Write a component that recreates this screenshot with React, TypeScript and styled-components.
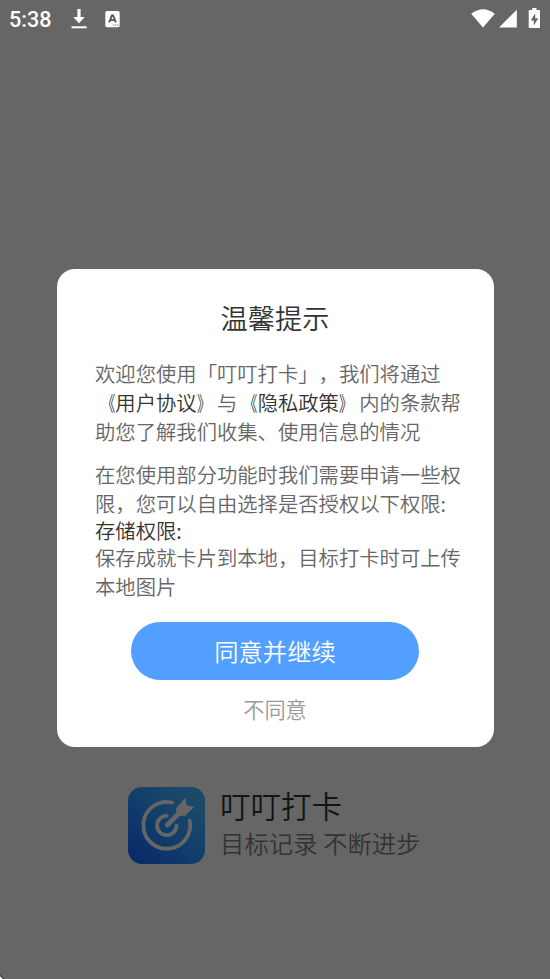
import React from "react";
import styled, { createGlobalStyle } from "styled-components";

const GlobalStyle = createGlobalStyle`
  * { box-sizing: border-box; }
  body {
    margin: 0;
    background: #666666;
    font-family: Roboto, "Noto Sans CJK SC", sans-serif;
    text-spacing-trim: space-all;
  }
`;

const Screen = styled.div`
  display: flex;
  flex-direction: column;
  align-items: center;
  width: 550px;
  height: 979px;
  overflow: hidden;
  position: relative;
  background: #666666;
`;

const StatusBar = styled.header`
  display: flex;
  align-items: center;
  width: 100%;
  height: 38px;
  padding: 0 8px 0 9px;
  color: #fff;
`;

const Clock = styled.span`
  width: 61px;
  font: 500 21.6px/39px Roboto, sans-serif;
`;

const StatusIcons = styled.div<{ $end?: boolean }>`
  display: flex;
  align-items: center;
  gap: 17px;
  height: 37px;
  margin-left: ${(p) => (p.$end ? "auto" : "0")};
`;

const Card = styled.section`
  display: flex;
  flex-direction: column;
  align-items: center;
  width: 437px;
  height: 478px;
  margin-top: 231px;
  padding-top: 28px;
  border-radius: 18px;
  background: #fff;
  font-family: "Noto Sans CJK SC", sans-serif;
  font-weight: 350;
`;

const Title = styled.h1`
  margin: 0;
  color: #333;
  font-size: 27.2px;
  font-weight: 350;
  line-height: 40px;
`;

const Terms = styled.div`
  width: 360px;
  margin-top: 22px;
  color: #666;
  font-size: 20.33px;
  line-height: 29px;
  white-space: nowrap;
`;

const Paragraph = styled.p<{ $gap?: number }>`
  margin: ${(p) => p.$gap ?? 0}px 0 0;
`;

const Link = styled.span`
  color: #333;
`;

const Bracket = styled.span<{ $side: "left" | "right" }>`
  display: inline-block;
  transform: scaleX(0.68);
  transform-origin: ${(p) => (p.$side === "left" ? "right" : "left")} center;
`;

const PermissionName = styled.h2`
  margin: 0;
  color: #333;
  font-size: 20.33px;
  font-weight: 350;
  line-height: 25px;
`;

const AgreeButton = styled.button`
  width: 288px;
  height: 58px;
  margin-top: 21px;
  padding: 0;
  border: 0;
  border-radius: 29px;
  background: #529fff;
  color: #fff;
  font: 350 24.3px/58px "Noto Sans CJK SC", sans-serif;
`;

const DeclineButton = styled.button`
  margin-top: 13px;
  padding: 0;
  border: 0;
  background: none;
  color: #999;
  font: 350 21.2px/32px "Noto Sans CJK SC", sans-serif;
`;

const Brand = styled.footer`
  display: flex;
  align-items: flex-start;
  width: 294px;
  margin-top: 40px;
  font-family: "Noto Sans CJK SC", sans-serif;
  font-weight: 350;
  white-space: nowrap;
`;

const BrandText = styled.div`
  margin: -1px 0 0 15px;
`;

const BrandName = styled.div`
  color: #141414;
  font-size: 30.5px;
  line-height: 38px;
`;

const Slogan = styled.div`
  color: #333;
  font-size: 24.4px;
  line-height: 37px;
`;

const Corner = styled.svg`
  position: absolute;
  left: 0;
  bottom: 0;
`;

const DownloadIcon = () => (
  <svg width="18" height="22" viewBox="0 0 18 22">
    <path d="M7.4 1h3.2v8h4.2L9 15.2 3.2 9h4.2z" fill="#fff" />
    <path d="M1.5 18.3h15.2v2H1.5z" fill="#fff" />
  </svg>
);

const LetterIcon = () => (
  <svg width="15" height="17" viewBox="0 0 15 17">
    <rect x="0.3" y="0" width="14.4" height="16.2" rx="1.7" fill="#fff" />
    <path d="M4.1 11.3 6.9 4.3h1.2l2.8 7M5.1 9.1h4.8" fill="none" stroke="#555" strokeWidth="1.8" />
    <path d="M8 14h1.2m1 0h1.2m1 0h1.2" stroke="#666" strokeWidth="1.2" />
  </svg>
);

const LogoIcon = () => (
  <svg width="77" height="77" viewBox="0 0 77 77">
    <defs>
      <linearGradient id="logo" x1="0.1" y1="0.9" x2="0.8" y2="0.15">
        <stop offset="0" stopColor="#0a2c69" />
        <stop offset="0.55" stopColor="#123f6b" />
        <stop offset="1" stopColor="#1b4968" />
      </linearGradient>
    </defs>
    <rect width="77" height="77" rx="14" fill="url(#logo)" />
    <g fill="none" stroke="#666" strokeWidth="3.8" strokeLinecap="round">
      <path d="M44.3 15.6A23.4 23.4 0 1 0 61.7 33.6" />
      <path d="M38.7 28.7A9.7 9.7 0 1 0 48.5 38.6" />
      <path d="M39.3 38 52 25.3" strokeWidth="4.6" />
    </g>
    <path d="M48 21.2 57.3 10.8 58.8 18.5 66.6 19.8 57.2 28.7 51.2 28.8 48.4 26z" fill="#666" />
  </svg>
);

const DocumentName = ({ children }: { children: string }) => (
  <Link>
    <Bracket $side="left">《</Bracket>
    {children}
    <Bracket $side="right">》</Bracket>
  </Link>
);

export default function App() {
  return (
    <>
      <GlobalStyle />
      <Screen>
        <StatusBar>
          <Clock>5:38</Clock>
          <StatusIcons>
            <DownloadIcon />
            <LetterIcon />
          </StatusIcons>
          <StatusIcons $end>
            <svg width="72" height="22" viewBox="0 0 72 22" fill="#fff">
              <path d="M1.2 5.8Q13 -3.2 24.8 5.8L13 19.4z" />
              <path d="M29 19.5 46.8 1.7v17.8z" />
              <path d="M62.2 0h4.3v2H69q1 0 1 1v16q0 1-1 1h-9.3q-1 0-1-1V3q0-1 1-1h2.5z" />
              <path d="M65.2 5.3 60.8 12.4h3v5.2l4.4-7.3h-3z" fill="#666" />
            </svg>
          </StatusIcons>
        </StatusBar>
        <Card>
          <Title>温馨提示</Title>
          <Terms>
            <Paragraph>
              欢迎您使用「叮叮打卡」，我们将通过
              <br />
              <DocumentName>用户协议</DocumentName>与<DocumentName>隐私政策</DocumentName>内的条款帮
              <br />
              助您了解我们收集、使用信息的情况
            </Paragraph>
            <Paragraph $gap={14}>
              在您使用部分功能时我们需要申请一些权
              <br />
              限，您可以自由选择是否授权以下权限:
            </Paragraph>
            <PermissionName>存储权限:</PermissionName>
            <Paragraph>
              保存成就卡片到本地，目标打卡时可上传
              <br />
              本地图片
            </Paragraph>
          </Terms>
          <AgreeButton>同意并继续</AgreeButton>
          <DeclineButton>不同意</DeclineButton>
        </Card>
        <Brand>
          <LogoIcon />
          <BrandText>
            <BrandName>叮叮打卡</BrandName>
            <Slogan>目标记录 不断进步</Slogan>
          </BrandText>
        </Brand>
        <Corner width="4" height="4" viewBox="0 0 4 4">
          <path d="M0 0 4 4H0z" fill="#000" />
          <path d="M0 1 3 4H0z" fill="#fff" />
        </Corner>
      </Screen>
    </>
  );
}
